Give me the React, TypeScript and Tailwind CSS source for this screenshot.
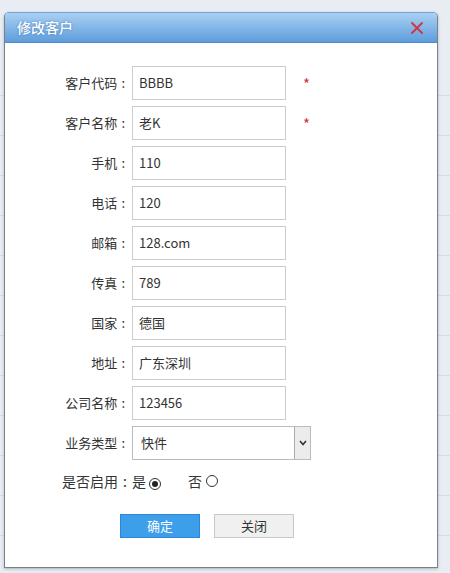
import React from "react";

const fields: { label: string; value: string; required?: boolean }[] = [
  { label: "客户代码", value: "BBBB", required: true },
  { label: "客户名称", value: "老K", required: true },
  { label: "手机", value: "110" },
  { label: "电话", value: "120" },
  { label: "邮箱", value: "128.com" },
  { label: "传真", value: "789" },
  { label: "国家", value: "德国" },
  { label: "地址", value: "广东深圳" },
  { label: "公司名称", value: "123456" },
];

const font = {
  fontFamily: '"Microsoft YaHei", "Noto Sans CJK SC", "Noto Sans", sans-serif',
};

function Radio({ checked }: { checked?: boolean }) {
  return (
    <span className="inline-flex h-[12px] w-[12px] items-center justify-center rounded-full border border-[#333] bg-white">
      {checked && <span className="h-[6px] w-[6px] rounded-full bg-[#222]" />}
    </span>
  );
}

function Label({ text }: { text: string }) {
  return (
    <label className="flex w-[127px] justify-end pr-[7px]">
      {text}
      <span className="ml-[4px]">:</span>
    </label>
  );
}

export default function App() {
  return (
    <div
      className="relative h-[573px] w-[450px] overflow-hidden bg-[#e8edf4]"
      style={font}
    >
      {/* page behind the dialog */}
      <div className="flex flex-col pt-[56px]">
        <div className="h-[40px] border-b border-[#d6dde8]" />
        {Array.from({ length: 12 }).map((_, i) => (
          <div key={i} className="h-[40px] border-b border-[#d6dde8]" />
        ))}
      </div>

      <div className="absolute left-[4px] top-[12px] flex h-[556px] w-[434px] flex-col rounded-t-[5px] border border-[#7a7f88] border-t-[#6fa5dc] bg-white shadow-[0_1px_3px_rgba(0,0,0,0.25)]">
        <div className="flex h-[30px] items-center justify-between rounded-t-[4px] border-b border-[#4f8ac6] bg-gradient-to-b from-[#a9d0f2] to-[#5e9ddb] pl-[12px] pr-[14px]">
          <span className="text-[14px] font-medium text-white [text-shadow:0_0_2px_rgba(40,90,160,0.7)]">
            修改客户
          </span>
          <svg width="12" height="12" viewBox="0 0 12 12">
            <path
              d="M1 1 L11 11 M11 1 L1 11"
              stroke="#d2343f"
              strokeWidth="1.8"
              strokeLinecap="round"
            />
          </svg>
        </div>

        <div className="flex flex-col gap-[6px] pt-[23px] text-[13px] text-[#333]">
          {fields.map((f) => (
            <div key={f.label} className="flex items-center">
              <Label text={f.label} />
              <div className="flex h-[34px] w-[154px] items-center border border-[#cccccc] px-[6px]">
                {f.value}
              </div>
              {f.required && (
                <span className="ml-[17px] mt-[2px] text-[15px] text-[#d2343f]">*</span>
              )}
            </div>
          ))}
          <div className="flex items-center">
            <Label text="业务类型" />
            <div className="flex h-[34px] w-[179px] items-center border border-[#bbbbbb]">
              <span className="flex-1 px-[8px]">快件</span>
              <div className="flex h-full w-[16px] items-center justify-center border-l border-[#aaaaaa] bg-[#ececec]">
                <svg width="8" height="6" viewBox="0 0 8 6">
                  <path d="M1 1 L4 4.5 L7 1" fill="none" stroke="#333" strokeWidth="1.6" />
                </svg>
              </div>
            </div>
          </div>
          <div className="mt-[5px] flex items-center pl-[57px] text-[14px]">
            <span>是否启用</span>
            <span className="mx-[5px]">:</span>
            <span>是</span>
            <span className="ml-[3px]">
              <Radio checked />
            </span>
            <span className="ml-[27px]">否</span>
            <span className="ml-[4px]">
              <Radio />
            </span>
          </div>
        </div>

        <div className="mt-[22px] flex gap-[14px] pl-[115px] text-[13px]">
          <button className="h-[24px] w-[80px] border border-[#2f86d4] bg-[#3d9eea] text-white">
            确定
          </button>
          <button className="h-[24px] w-[80px] border border-[#c8c8c8] bg-[#f0f0f0] text-[#333]">
            关闭
          </button>
        </div>
      </div>
    </div>
  );
}
